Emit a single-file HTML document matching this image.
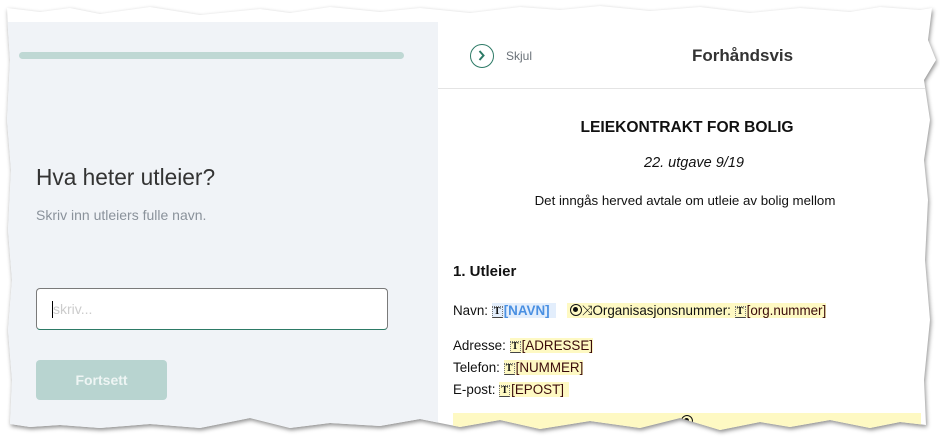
<!DOCTYPE html>
<html><head><meta charset="utf-8"><style>
*{margin:0;padding:0;box-sizing:border-box}
body{width:940px;height:440px;background:#fff;position:relative;overflow:hidden;font-family:"Liberation Sans",sans-serif}
.wrap{position:absolute;left:0;top:0;width:940px;height:440px;filter:drop-shadow(1px 2px 2px rgba(0,0,0,.45))}
.paper{position:absolute;left:0;top:0;width:940px;height:440px;background:#fff;
clip-path:polygon(7px 8px,40px 12px,70px 8px,100px 14px,150px 7px,200px 15px,260px 9px,290px 13px,330px 7px,380px 12px,420px 8px,470px 13px,520px 7px,560px 10px,600px 6px,650px 11px,700px 7px,750px 13px,800px 8px,850px 12px,880px 7px,920px 10px,932px 8px,928px 40px,936px 60px,924px 80px,930px 120px,924px 160px,928px 200px,925px 260px,930px 320px,924px 380px,926px 425px,900px 422px,870px 428px,830px 420px,790px 427px,760px 422px,720px 430px,680px 418px,640px 428px,590px 421px,540px 429px,500px 420px,460px 427px,420px 419px,380px 426px,330px 423px,290px 428px,250px 418px,200px 428px,150px 424px,100px 428px,60px 425px,30px 427px,10px 424px,12px 380px,8px 330px,12px 280px,8px 230px,11px 170px,7px 120px,10px 60px,8px 30px)}
.left{position:absolute;left:0;top:22px;width:438px;height:420px;background:#f0f3f7}
.bar{position:absolute;left:19px;width:385px;height:7px;border-radius:4px;background:#bfd8d4}
h2{position:absolute;left:36px;font-weight:normal;font-size:22.7px;color:#333}
.sub{position:absolute;left:36px;font-size:14px;color:#8a929b}
.inp{position:absolute;left:36px;width:352px;height:42px;background:#fff;border:1px solid #7a7a7a;border-bottom-color:#2d7a66;border-radius:4px}
.inp span{position:absolute;left:16px;top:12px;font-size:14px;color:#ccc}
.inp i{position:absolute;left:15px;top:12px;width:1px;height:17px;background:#000}
.btn{position:absolute;left:36px;width:131px;height:40px;background:#b8d4d0;border-radius:4px;color:#eef5f4;font-size:14px;font-weight:bold;text-align:center;line-height:40px}
.hdr{position:absolute;left:438px;top:22px;width:500px;height:67px;border-bottom:1px solid #e4e4e4}
.circ{position:absolute;left:32px;top:22px;width:24px;height:24px;border:1.5px solid #2d7a66;border-radius:50%}
.skj{position:absolute;left:68px;top:27px;font-size:12px;color:#6a7178}
.fh{position:absolute;left:254px;top:24px;font-size:17px;font-weight:bold;color:#333}
.doc{position:absolute;left:438px;top:90px;width:490px;font-size:13.4px;color:#111}
.c{position:absolute;width:100%;text-align:center;left:0}
.f{background:#fef9c3}
.r{color:#3a0a0a}
.tt{display:inline-block;width:11px;height:12px;border:1px dotted #777;border-bottom:1.5px solid #444;font-size:10px;line-height:10px;text-align:center;font-weight:bold;vertical-align:1px;margin-right:1px;font-family:"Liberation Serif",serif}
.rad{display:inline-block;width:12px;height:12px;border:1.5px solid #111;border-radius:50%;position:relative;vertical-align:-1px}
.rad:after{content:"";position:absolute;left:2px;top:2px;width:5px;height:5px;background:#111;border-radius:50%}
</style></head><body>
<div class="wrap"><div class="paper">
<div class="left">
<div class="bar" style="top:30px"></div>
<h2 style="top:142px">Hva heter utleier?</h2>
<div class="sub" style="top:185px">Skriv inn utleiers fulle navn.</div>
<div class="inp" style="top:266px"><i></i><span>skriv...</span></div>
<div class="btn" style="top:338px">Fortsett</div>
</div>
<div class="hdr">
<div class="circ"><svg width="21" height="21" viewBox="0 0 21 21"><path d="M8.5 6 L12.5 10.5 L8.5 15" fill="none" stroke="#2d7a66" stroke-width="2"/></svg></div>
<div class="skj">Skjul</div>
<div class="fh">Forhåndsvis</div>
</div>
<div class="doc">
<div class="c" style="top:29px;font-weight:bold;font-size:15.6px;left:4px">LEIEKONTRAKT FOR BOLIG</div>
<div class="c" style="top:65px;font-style:italic;font-size:14.5px;left:11px">22. utgave 9/19</div>
<div class="c" style="top:103px;left:2px;font-size:13.3px">Det inngås herved avtale om utleie av bolig mellom</div>
<div style="position:absolute;left:15px;top:173px;font-weight:bold;font-size:15px">1. Utleier</div>
<div style="position:absolute;left:15px;top:213px;white-space:nowrap">Navn: <span style="background:#e3eefc;color:#4a90e2;padding-right:6px;font-weight:bold"><span class="tt" style="color:#111">T</span>[NAVN]</span> &nbsp; <span class="f" style="padding-left:3px"><span class="rad"></span>⤨Organisasjonsnummer: <span class="tt">T</span><span class="r">[org.nummer]</span></span></div>
<div style="position:absolute;left:15px;top:248px">Adresse: <span class="f"><span class="tt">T</span><span class="r">[ADRESSE]</span></span></div>
<div style="position:absolute;left:15px;top:270px">Telefon: <span class="f"><span class="tt">T</span><span class="r">[NUMMER]</span></span></div>
<div style="position:absolute;left:15px;top:292px">E-post: <span class="f" style="padding-right:5px"><span class="tt">T</span><span class="r">[EPOST]</span></span></div>
<div class="f" style="position:absolute;left:15px;top:323px;width:468px;height:30px"><span class="rad" style="position:absolute;left:228px;top:2px"></span></div>
</div>
</div></div>
</body></html>
